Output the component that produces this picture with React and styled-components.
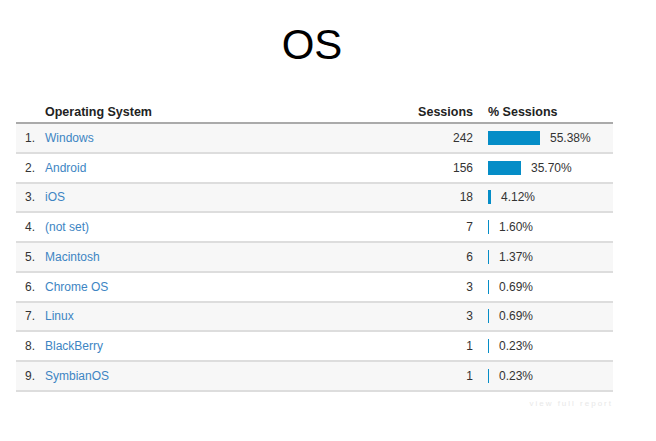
import React from 'react';
import styled, { createGlobalStyle } from 'styled-components';

const GlobalStyle = createGlobalStyle`
  html, body {
    margin: 0;
    padding: 0;
    background: #ffffff;
  }
  body {
    font-family: 'Liberation Sans', Arial, sans-serif;
    color: #333;
  }
`;

const Page = styled.div`
  width: 656px;
  height: 441px;
  background: #fff;
  overflow: hidden;
`;

const Title = styled.h1`
  margin: 0;
  padding: 24px 32px 0 0;
  height: 80px;
  box-sizing: border-box;
  text-align: center;
  font-family: 'Liberation Sans', Arial, sans-serif;
  font-weight: normal;
  font-size: 42px;
  line-height: 42px;
  color: #000;
`;

const Table = styled.div`
  margin: 22px 0 0 16px;
  width: 597px;
  font-size: 12px;
`;

const Row = styled.div`
  display: grid;
  grid-template-columns: 29px 1fr 60px 140px;
  align-items: center;
  box-sizing: border-box;
  height: ${({ $head }) => ($head ? '22px' : '29.75px')};
  border-bottom: 2px solid ${({ $head }) => ($head ? '#aaaaaa' : '#dddddd')};
  background: ${({ $odd }) => ($odd ? '#f7f7f7' : '#ffffff')};
  font-weight: ${({ $head }) => ($head ? 'bold' : 'normal')};
  font-size: ${({ $head }) => ($head ? '12.5px' : '12px')};
  color: ${({ $head }) => ($head ? '#222' : '#333')};
`;

const Index = styled.span`
  padding-left: 9px;
`;

const Name = styled.span`
  color: ${({ $link }) => ($link ? '#3d85c3' : 'inherit')};
`;

const Sessions = styled.span`
  text-align: right;
`;

const PercentCell = styled.span`
  display: flex;
  align-items: center;
  gap: 10px;
  padding-left: 15px;
`;

const Bar = styled.span`
  display: inline-block;
  height: 14px;
  background: #058dc7;
`;

const Footer = styled.div`
  width: 597px;
  margin-left: 16px;
  padding-top: 7px;
  text-align: right;
  font-size: 8px;
  color: #e8e8e8;
  letter-spacing: 2px;
`;

const rows = [
  { name: 'Windows', sessions: 242, pct: 55.38 },
  { name: 'Android', sessions: 156, pct: 35.7 },
  { name: 'iOS', sessions: 18, pct: 4.12 },
  { name: '(not set)', sessions: 7, pct: 1.6 },
  { name: 'Macintosh', sessions: 6, pct: 1.37 },
  { name: 'Chrome OS', sessions: 3, pct: 0.69 },
  { name: 'Linux', sessions: 3, pct: 0.69 },
  { name: 'BlackBerry', sessions: 1, pct: 0.23 },
  { name: 'SymbianOS', sessions: 1, pct: 0.23 },
];

const App = () => (
  <Page>
    <GlobalStyle />
    <Title>OS</Title>
    <Table>
      <Row $head>
        <span />
        <Name>Operating System</Name>
        <Sessions>Sessions</Sessions>
        <PercentCell>% Sessions</PercentCell>
      </Row>
      {rows.map((r, i) => (
        <Row key={r.name} $odd={i % 2 === 0}>
          <Index>{i + 1}.</Index>
          <Name $link>{r.name}</Name>
          <Sessions>{r.sessions}</Sessions>
          <PercentCell>
            <Bar style={{ width: Math.max(1, Math.floor(r.pct * 0.94)) }} />
            {r.pct.toFixed(2)}%
          </PercentCell>
        </Row>
      ))}
    </Table>
    <Footer>view full report</Footer>
  </Page>
);

export default App;
